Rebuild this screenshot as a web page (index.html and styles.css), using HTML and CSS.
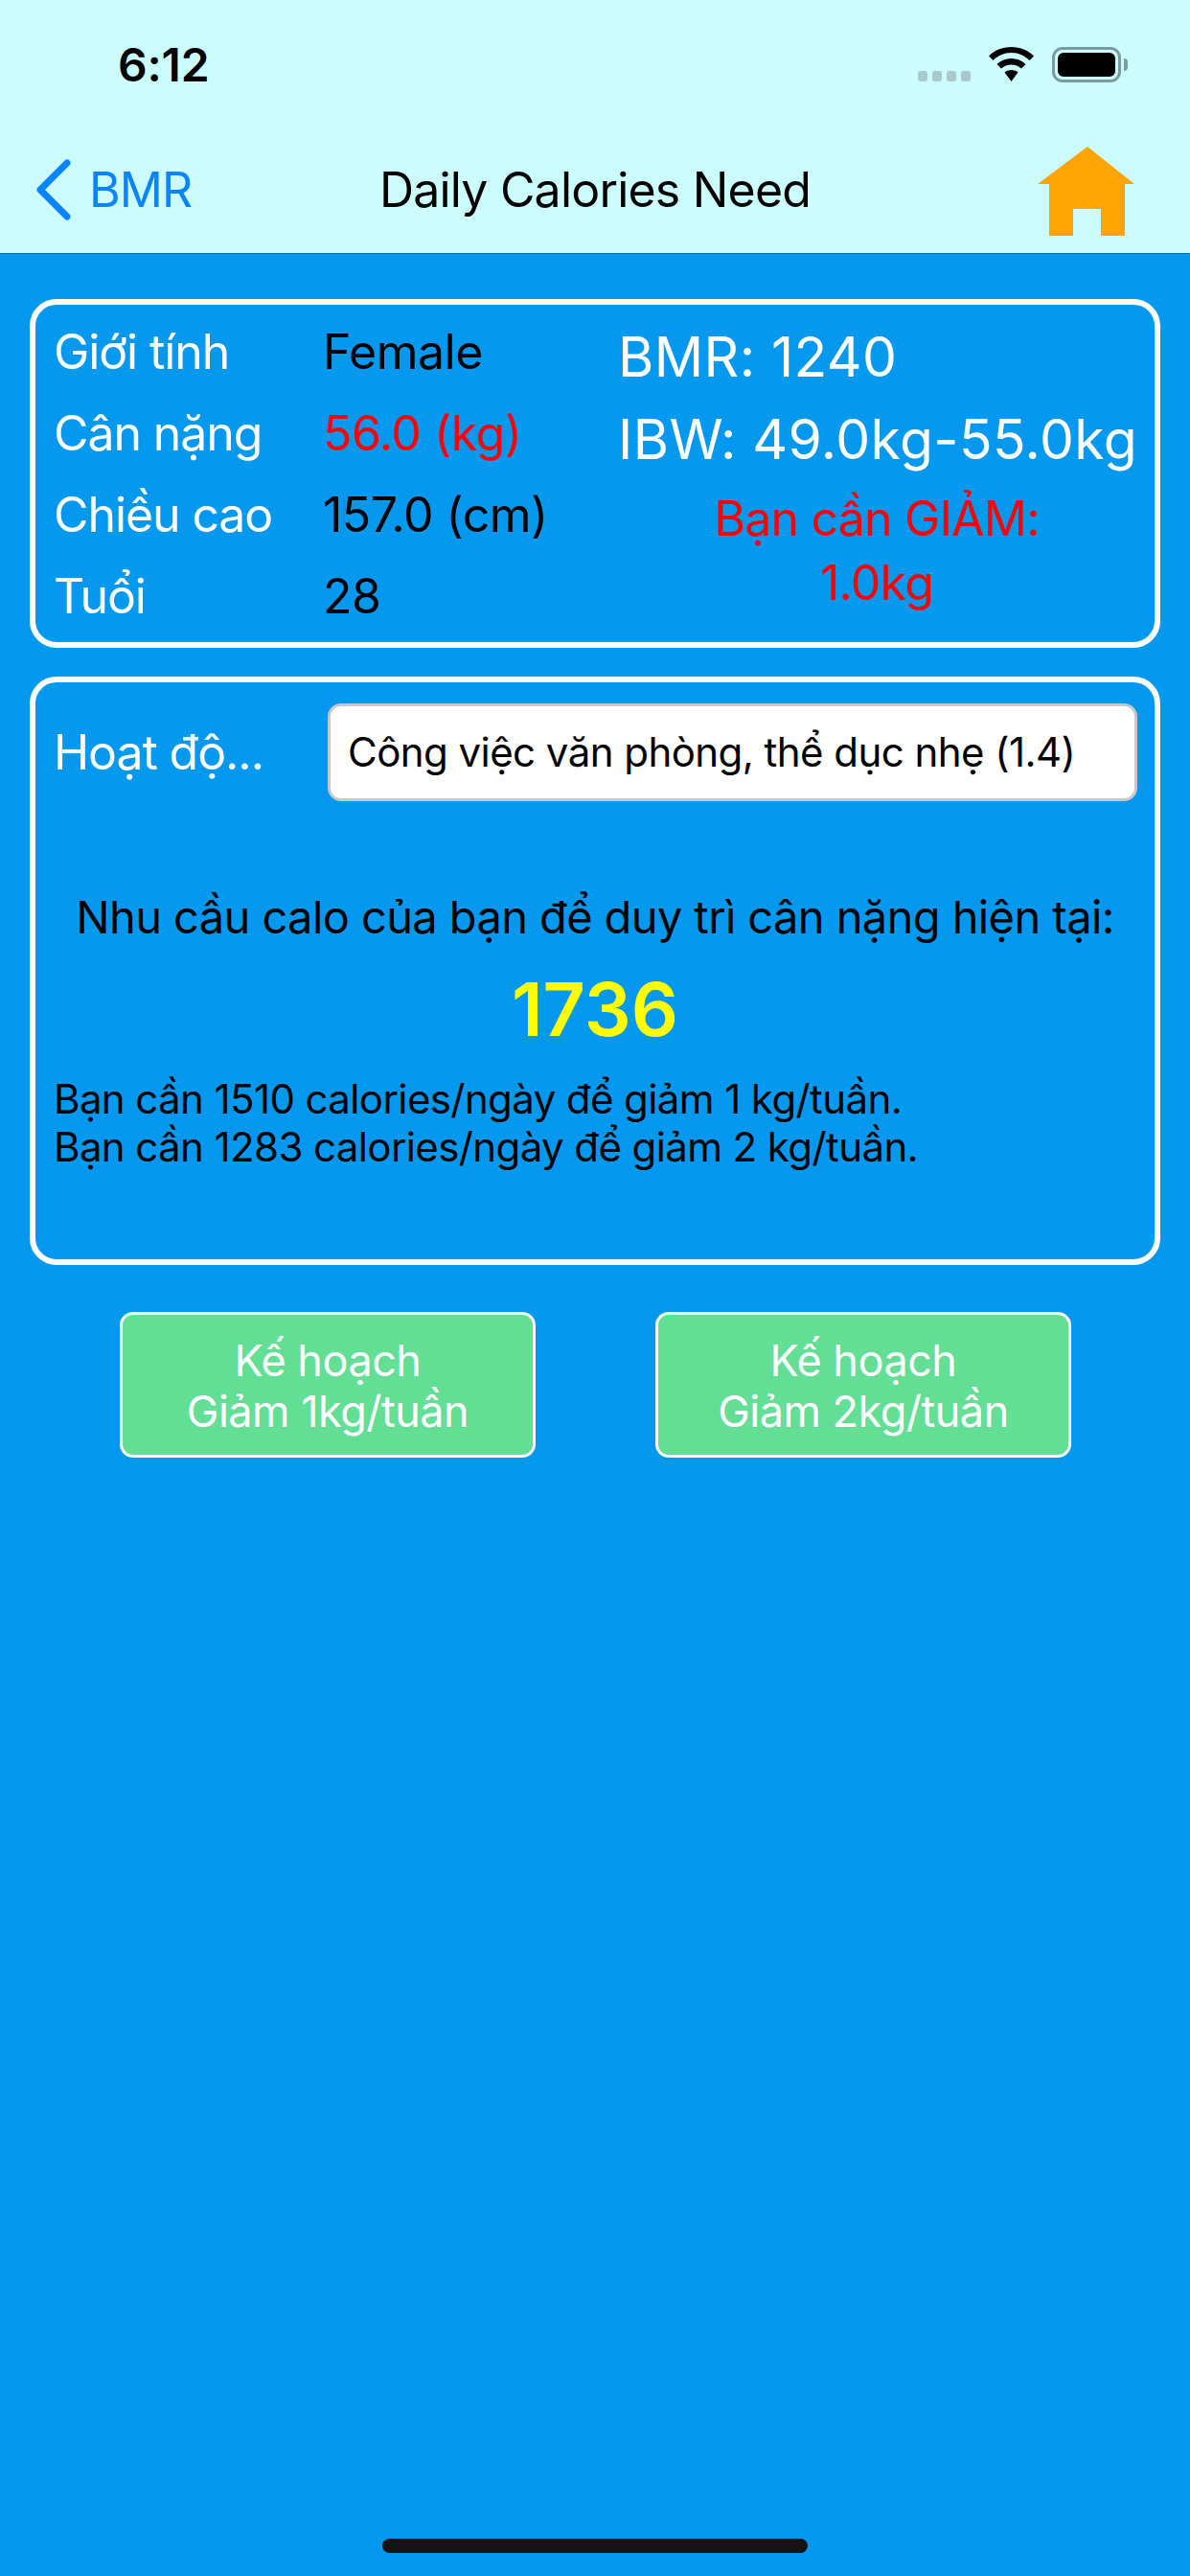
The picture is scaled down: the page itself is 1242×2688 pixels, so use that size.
FILE: index.html
```html
<!DOCTYPE html>
<html lang="vi">
<head>
<meta charset="utf-8">
<title>Daily Calories Need</title>
<link rel="stylesheet" href="styles.css">
</head>
<body>
<div class="screen">
  <header class="topbar">
    <div class="status">
      <span class="time">6:12</span>
      <div class="status-icons">
        <div class="signal"><i></i><i></i><i></i><i></i></div>
        <svg class="wifi" width="47" height="36" viewBox="0 0 47 36"><path d="M23.500 0C14 0 6 3.500 0 9.500L4.500 14C9.500 9 16 6 23.500 6S37.500 9 42.500 14L47 9.500C41 3.500 33 0 23.500 0Z"/><path d="M23.500 12C17.500 12 12.500 14 8.500 18L13 22.500C16 20 19.500 18.500 23.500 18.500S31 20 34 22.500L38.500 18C34.500 14 29.500 12 23.500 12Z"/><path d="M23.500 24C20.500 24 18 25 16.500 26.500L23.500 36L30.500 26.500C29 25 26.500 24 23.500 24Z"/></svg>
        <div class="battery"><div class="battery-body"><div class="battery-fill"></div></div><div class="battery-cap"></div></div>
      </div>
    </div>
    <nav class="nav">
      <a class="back">
        <svg width="40" height="64" viewBox="0 0 40 64"><path d="M32 4 L4 32 L32 60" fill="none" stroke="#0a84ff" stroke-width="7" stroke-linecap="round" stroke-linejoin="round"/></svg>
        <span>BMR</span>
      </a>
      <h1 class="title">Daily Calories Need</h1>
      <svg class="home" width="101" height="93" viewBox="0 0 101 93"><path d="M52 0 L101 39 L91 39 L91 93 L66 93 L66 65 L37 65 L37 93 L12 93 L12 39 L0 39 Z" fill="#ffa505"/></svg>
    </nav>
  </header>

  <main class="content">
    <section class="panel panel-info">
      <div class="facts">
        <div class="fact"><span class="label">Giới tính</span><span class="value">Female</span></div>
        <div class="fact"><span class="label">Cân nặng</span><span class="value red">56.0 (kg)</span></div>
        <div class="fact"><span class="label">Chiều cao</span><span class="value">157.0 (cm)</span></div>
        <div class="fact"><span class="label">Tuổi</span><span class="value">28</span></div>
      </div>
      <div class="summary">
        <div class="big">BMR: 1240</div>
        <div class="big">IBW: 49.0kg-55.0kg</div>
        <div class="advice">Bạn cần GIẢM:<br>1.0kg</div>
      </div>
    </section>

    <section class="panel panel-activity">
      <div class="activity-row">
        <span class="label">Hoạt độ...</span>
        <div class="select">Công việc văn phòng, thể dục nhẹ (1.4)</div>
      </div>
      <p class="need">Nhu cầu calo của bạn để duy trì cân nặng hiện tại:</p>
      <div class="kcal">1736</div>
      <p class="plans">Bạn cần 1510 calories/ngày để giảm 1 kg/tuần.<br>Bạn cần 1283 calories/ngày để giảm 2 kg/tuần.</p>
    </section>

    <div class="actions">
      <button class="plan-btn">Kế hoạch<br>Giảm 1kg/tuần</button>
      <button class="plan-btn">Kế hoạch<br>Giảm 2kg/tuần</button>
    </div>
  </main>
  <div class="home-indicator"></div>
</div>
</body>
</html>
```
FILE: styles.css
```css
* { box-sizing: border-box; }
html, body { margin: 0; padding: 0; }
body { width: 1242px; height: 2688px; overflow: hidden; font-family: Inter, "Liberation Sans", sans-serif; background: #0499ee; }
.screen { width: 1242px; height: 2688px; display: flex; flex-direction: column; position: relative; background: #0499ee; }

.topbar { height: 265px; background: #cbfdfe; border-bottom: 1px solid #0a6f9f; flex: none; display: flex; flex-direction: column; }
.status { height: 132px; flex: none; display: flex; align-items: flex-start; justify-content: space-between; padding: 46px 0 0 123px; }
.time { font-size: 48px; font-weight: 600; line-height: 44px; color: #000; letter-spacing: -0.2px; }
.status-icons { display: flex; align-items: flex-start; margin-right: 65px; }
.signal { display: flex; gap: 5px; margin-top: 28px; margin-right: 19px; }
.signal i { width: 10px; height: 11px; border-radius: 3px; background: #abc9cb; }
.wifi { margin-top: 3px; margin-right: 19px; }
.wifi path { fill: #000; }
.battery { display: flex; align-items: center; margin-top: 3px; }
.battery-body { width: 72px; height: 37px; border: 3px solid #7d9b9d; border-radius: 11px; padding: 3px; }
.battery-fill { width: 100%; height: 100%; background: #000; border-radius: 6px; }
.battery-cap { width: 4px; height: 13px; background: #7d9b9d; border-radius: 0 4px 4px 0; margin-left: 3px; }

.nav { flex: 1; display: flex; align-items: center; position: relative; padding: 0 0 0 38px; }
.back { display: flex; align-items: center; gap: 15px; color: #0a84ff; font-size: 50px; letter-spacing: -1px; }
.title { position: absolute; left: 0; right: 0; top: 38px; margin: 0; text-align: center; font-size: 50px; font-weight: 400; line-height: 56px; color: #000; letter-spacing: -0.8px; }
.home { position: absolute; left: 1083px; top: 21px; }

.content { display: flex; flex-direction: column; padding: 47px 31px 0; }
.panel { border: 6px solid #fff; border-radius: 28px; width: 1180px; }
.panel-info { height: 364px; display: flex; padding: 6px 0 0 19px; }
.facts { width: 589px; flex: none; display: flex; flex-direction: column; }
.fact { height: 85px; flex: none; display: flex; align-items: center; }
.label { color: #fff; font-size: 50px; letter-spacing: -1.1px; width: 281px; flex: none; }
.value { color: #000; font-size: 50px; letter-spacing: -0.5px; }
.red { color: #ff0000; }
.summary { flex: 1; display: flex; flex-direction: column; margin-top: 6px; }
.big { color: #fff; font-size: 57px; line-height: 86px; height: 86px; letter-spacing: 0.4px; white-space: nowrap; }
.advice { color: #ff0000; font-size: 50px; line-height: 67px; text-align: center; letter-spacing: -0.8px; margin: 6px 20px 0 0; }

.panel-activity { margin-top: 30px; height: 614px; padding: 22px 19px 0; }
.activity-row { display: flex; align-items: center; }
.activity-row .label { width: 286px; }
.select { width: 845px; height: 102px; flex: none; background: #fff; border: 3px solid #c8c8c8; border-radius: 14px; color: #000; font-size: 42px; line-height: 96px; padding-left: 18px; letter-spacing: -0.55px; white-space: nowrap; }
.need { margin: 91px 0 0; text-align: center; color: #000; font-size: 47px; line-height: 60px; letter-spacing: -0.6px; white-space: nowrap; }
.kcal { text-align: center; color: #ffff00; font-size: 77px; font-weight: 600; line-height: 90px; margin-top: 21px; }
.plans { margin: 24px 0 0; color: #000; font-size: 42px; line-height: 50px; letter-spacing: -0.6px; white-space: nowrap; }

.actions { display: flex; gap: 125px; margin: 49px 0 0 94px; }
.plan-btn { width: 434px; height: 152px; background: #62de95; border: 3px solid #fff; border-radius: 14px; color: #fff; font-family: inherit; font-size: 45px; line-height: 53px; letter-spacing: -0.5px; padding: 2px 0 0; }

.home-indicator { position: absolute; left: 399px; bottom: 24px; width: 444px; height: 15px; border-radius: 8px; background: #141414; }
```
